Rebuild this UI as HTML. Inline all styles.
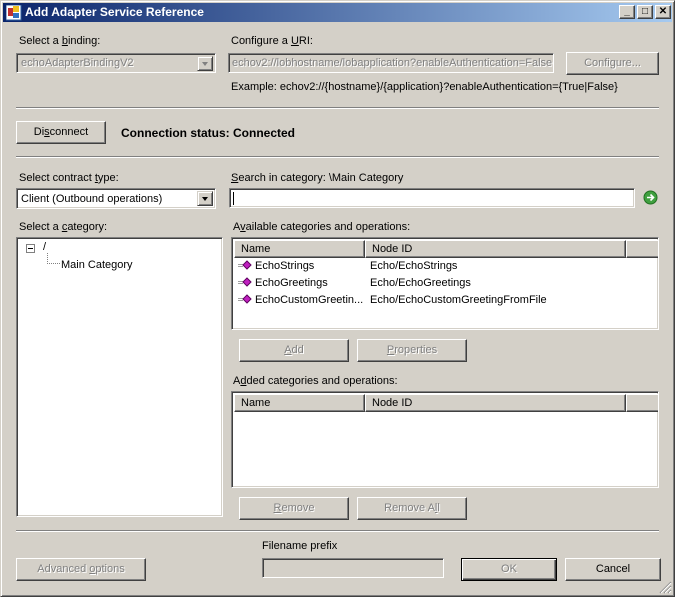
<!DOCTYPE html>
<html><head><meta charset="utf-8"><style>
*{box-sizing:border-box;margin:0;padding:0}
body{width:675px;height:597px;background:#d4d0c8;font-family:"Liberation Sans",sans-serif;font-size:11px;color:#000;position:relative;overflow:hidden}
.a{position:absolute;white-space:nowrap}
.win{position:absolute;left:0;top:0;width:675px;height:597px;border:1px solid;border-color:#d4d0c8 #404040 #404040 #d4d0c8;box-shadow:inset 1px 1px #fff,inset -1px -1px #808080}
.title{position:absolute;left:3px;top:3px;width:669px;height:19px;background:linear-gradient(to right,#0a246a,#a6caf0);color:#fff;font-weight:bold;font-size:12px;line-height:19px;padding-left:22px}
.tb{position:absolute;top:5px;width:16px;height:14px;background:#d4d0c8;border:1px solid;border-color:#fff #404040 #404040 #fff;box-shadow:inset -1px -1px #808080;font-size:10px;font-weight:bold;text-align:center;line-height:12px;color:#000}
.btn{position:absolute;height:23px;background:#d4d0c8;border:1px solid;border-color:#fff #404040 #404040 #fff;box-shadow:inset -1px -1px #808080;text-align:center;line-height:20px}
.dis{color:#808080;text-shadow:1px 1px #fff}
.sunk{position:absolute;border:1px solid;border-color:#808080 #fff #fff #808080;box-shadow:inset 1px 1px #404040,inset -1px -1px #d4d0c8;background:#fff}
.sunkd{background:#d4d0c8}
.sep{position:absolute;left:16px;width:643px;height:2px;border-top:1px solid #808080;border-bottom:1px solid #fff}
.dd{position:absolute;top:2px;right:2px;width:16px;height:15px;background:#d4d0c8;border:1px solid;border-color:#d4d0c8 #404040 #404040 #d4d0c8;box-shadow:inset 1px 1px #fff,inset -1px -1px #808080}
.dd:after{content:"";position:absolute;left:4px;top:5px;border-left:3.5px solid transparent;border-right:3.5px solid transparent;border-top:4px solid #000}
.dd.g:after{border-top-color:#808080}
.hdr{position:absolute;top:2px;height:18px;background:#d4d0c8;border:1px solid;border-color:#fff #404040 #404040 #fff;box-shadow:inset -1px -1px #808080;padding-left:6px;line-height:16px}
.row{position:absolute;left:6px;height:16px;line-height:16px}
u{text-decoration:underline}
</style></head><body>
<div class="win"></div>
<div class="title">Add Adapter Service Reference</div>
<svg class="a" style="left:6px;top:5px" width="16" height="16"><rect x="0" y="0" width="15" height="15" fill="#fff" stroke="#3060a0"/><rect x="2" y="3" width="5" height="8" fill="#c03030"/><rect x="7" y="1" width="6" height="6" fill="#f0c020"/><rect x="7" y="8" width="6" height="5" fill="#3070c0"/></svg>
<div class="tb" style="left:619px">_</div><div class="tb" style="left:637px">□</div><div class="tb" style="left:655px">✕</div>

<div class="a" style="left:19px;top:35px">Select a <u>b</u>inding:</div>
<div class="sunk sunkd" style="left:16px;top:53px;width:200px;height:20px"><div class="a dis" style="left:4px;top:3px">echoAdapterBindingV2</div><div class="dd g"></div></div>
<div class="a" style="left:231px;top:35px">Configure a <u>U</u>RI:</div>
<div class="sunk sunkd" style="left:228px;top:53px;width:326px;height:20px;overflow:hidden"><div class="a dis" style="left:3px;top:3px">echov2://lobhostname/lobapplication?enableAuthentication=False</div></div>
<div class="btn dis" style="left:566px;top:52px;width:93px">Configure...</div>
<div class="a" style="left:231px;top:81px">Example: echov2://{hostname}/{application}?enableAuthentication={True|False}</div>
<div class="sep" style="top:107px"></div>
<div class="btn" style="left:16px;top:121px;width:90px">Di<u>s</u>connect</div>
<div class="a" style="left:121px;top:126px;font-weight:bold;font-size:12px">Connection status: Connected</div>
<div class="sep" style="top:156px"></div>

<div class="a" style="left:19px;top:172px">Select contract <u>t</u>ype:</div>
<div class="sunk" style="left:16px;top:188px;width:200px;height:21px"><div class="a" style="left:4px;top:4px">Client (Outbound operations)</div><div class="dd"></div></div>
<div class="a" style="left:231px;top:172px"><u>S</u>earch in category: \Main Category</div>
<div class="sunk" style="left:229px;top:188px;width:406px;height:20px"><div class="a" style="left:3px;top:3px;width:1px;height:13px;background:#000"></div></div>
<svg class="a" style="left:643px;top:190px" width="15" height="15"><circle cx="7.5" cy="7.5" r="6.5" fill="#40a040" stroke="#207020"/><path d="M4 7.5h6M7.5 4.5l3 3-3 3" stroke="#fff" stroke-width="1.6" fill="none"/></svg>

<div class="a" style="left:19px;top:221px">Select a <u>c</u>ategory:</div>
<div class="sunk" style="left:16px;top:237px;width:207px;height:280px">
<svg class="a" style="left:9px;top:6px" width="9" height="9"><rect x=".5" y=".5" width="8" height="8" fill="#fff" stroke="#808080"/><path d="M2 4.5h5" stroke="#000"/></svg>
<div class="a" style="left:26px;top:3px">/</div>
<svg class="a" style="left:30px;top:15px" width="14" height="14"><path d="M.5 0v10.5H14" stroke="#808080" stroke-dasharray="1 1" fill="none"/></svg>
<div class="a" style="left:44px;top:21px">Main Category</div>
</div>

<div class="a" style="left:233px;top:221px">A<u>v</u>ailable categories and operations:</div>
<div class="sunk" style="left:231px;top:237px;width:428px;height:93px;overflow:hidden">
<div class="hdr" style="left:2px;width:131px">Name</div><div class="hdr" style="left:133px;width:261px">Node ID</div><div class="hdr" style="left:394px;width:40px"></div>
<svg class="a" style="left:4px;top:20px" width="18" height="52"><g fill="#c020c0" stroke="#600060"><path d="M2 6.5h5M2 8.5h5" stroke="#a0a0a0"/><path d="M11 3l4 4-4 4-4-4z"/><path d="M2 23.5h5M2 25.5h5" stroke="#a0a0a0"/><path d="M11 20l4 4-4 4-4-4z"/><path d="M2 40.5h5M2 42.5h5" stroke="#a0a0a0"/><path d="M11 37l4 4-4 4-4-4z"/></g></svg>
<div class="row" style="left:23px;top:20px">EchoStrings</div><div class="row" style="left:138px;top:20px">Echo/EchoStrings</div>
<div class="row" style="left:23px;top:37px">EchoGreetings</div><div class="row" style="left:138px;top:37px">Echo/EchoGreetings</div>
<div class="row" style="left:23px;top:54px">EchoCustomGreetin...</div><div class="row" style="left:138px;top:54px">Echo/EchoCustomGreetingFromFile</div>
</div>
<div class="btn dis" style="left:239px;top:339px;width:110px"><u>A</u>dd</div>
<div class="btn dis" style="left:357px;top:339px;width:110px"><u>P</u>roperties</div>

<div class="a" style="left:233px;top:375px">A<u>d</u>ded categories and operations:</div>
<div class="sunk" style="left:231px;top:391px;width:428px;height:97px;overflow:hidden">
<div class="hdr" style="left:2px;width:131px">Name</div><div class="hdr" style="left:133px;width:261px">Node ID</div><div class="hdr" style="left:394px;width:40px"></div>
</div>
<div class="btn dis" style="left:239px;top:497px;width:110px"><u>R</u>emove</div>
<div class="btn dis" style="left:357px;top:497px;width:110px">Remove A<u>l</u>l</div>
<div class="sep" style="top:530px"></div>

<div class="a" style="left:262px;top:540px">Filename prefix</div>
<div class="sunk sunkd" style="left:262px;top:558px;width:182px;height:20px"></div>
<div class="btn dis" style="left:16px;top:558px;width:130px">Advanced <u>o</u>ptions</div>
<div class="btn dis" style="left:461px;top:558px;width:96px;border:1px solid #000;box-shadow:inset 1px 1px #fff,inset -1px -1px #404040,inset -2px -2px #808080">OK</div>
<div class="btn" style="left:565px;top:558px;width:96px">Cancel</div>
<svg class="a" style="left:659px;top:581px" width="13" height="13"><path d="M12 1L1 12M12 5L5 12M12 9L9 12" stroke="#808080" stroke-width="1.2"/><path d="M12 2L2 12M12 6L6 12M12 10L10 12" stroke="#fff"/></svg>
</body></html>
